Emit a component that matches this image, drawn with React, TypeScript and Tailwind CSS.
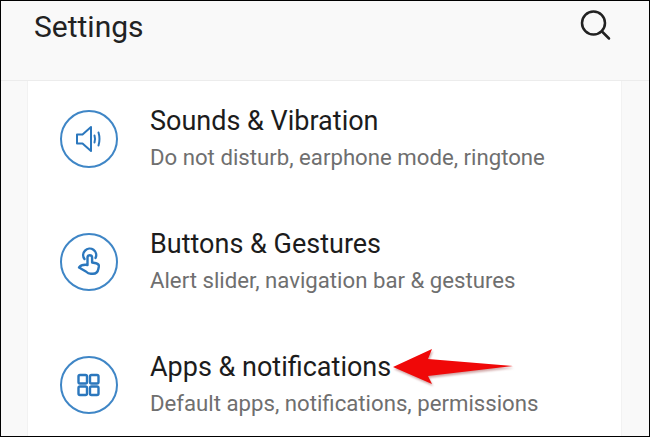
import type { ReactNode } from 'react';

const rows: { title: string; sub: string; icon: ReactNode; arrow?: boolean }[] = [
  {
    title: 'Sounds & Vibration',
    sub: 'Do not disturb, earphone mode, ringtone',
    icon: (
      <svg viewBox="0 0 30 30" className="h-[30px] w-[30px]" fill="none" stroke="#2b77bd" strokeWidth="2" strokeLinejoin="round" strokeLinecap="round">
        <path d="M3 10.500v9h5.500L17 27V3l-8.500 7.500z" />
        <path d="M20.500 11.500c.7 2.300.7 4.700 0 7" />
        <path d="M24.500 8.500c1.300 4.300 1.300 8.700 0 13" />
      </svg>
    ),
  },
  {
    title: 'Buttons & Gestures',
    sub: 'Alert slider, navigation bar & gestures',
    icon: (
      <svg viewBox="0 0 30 30" className="h-[30px] w-[30px]" fill="none" stroke="#2b77bd" strokeWidth="2.400" strokeLinejoin="round" strokeLinecap="round">
        <path d="M10.500 12a6.500 6.500 0 1 1 11-1" />
        <path d="M13.500 18v-7.500a2.300 2.300 0 0 1 4.600 0v5l4 .8c2 .4 3 1.700 2.700 3.500l-.4 2c-.5 3-2.500 5-5.500 5h-2c-2 0-3.500-.8-5-2.300L5 20.500c1.500-2 5-3 8.500-2.500z" />
      </svg>
    ),
  },
  {
    title: 'Apps & notifications',
    sub: 'Default apps, notifications, permissions',
    arrow: true,
    icon: (
      <svg viewBox="0 0 30 30" className="h-[30px] w-[30px]" fill="none" stroke="#2b77bd" strokeWidth="2.400">
        <rect x="4.500" y="5" width="8.500" height="8.500" rx="1.500" />
        <rect x="16" y="5" width="8.500" height="8.500" rx="1.500" />
        <rect x="4.500" y="16.500" width="8.500" height="8.500" rx="1.500" />
        <rect x="16" y="16.500" width="8.500" height="8.500" rx="1.500" />
      </svg>
    ),
  },
];

export default function App() {
  return (
    <div className="relative flex h-[437px] w-[650px] flex-col overflow-hidden border border-black bg-[#f9f9f9] font-['Roboto',sans-serif]">
      <header className="flex h-[80px] shrink-0 items-start justify-between border-b border-[#ececec] pl-[33px] pr-[38px]">
        <h1 className="mt-[6px] text-[30px] leading-[40px] text-[#222]">Settings</h1>
        <svg viewBox="0 0 32 32" className="mt-[8px] h-[32px] w-[32px]" fill="none" stroke="#222" strokeWidth="2.500" strokeLinecap="round">
          <circle cx="14.500" cy="14" r="11.500" />
          <path d="M23 22.500l7 7" />
        </svg>
      </header>

      <main className="ml-[26px] mr-[27px] flex-1 border-x border-[#f2f2f2] bg-white pl-[32px]">
        {rows.map((row) => (
          <div key={row.title} className="relative flex h-[123px] items-center pb-[8px]">
            <div className="flex h-[58px] w-[58px] shrink-0 items-center justify-center rounded-full border-2 border-[#3f86c6]">
              {row.icon}
            </div>
            <div className="mb-[3px] ml-[32px]">
              <div className="text-[27px] leading-[38px] text-[#1c1c1c]">{row.title}</div>
              <div className="mt-[1px] text-[22.2px] leading-[32px] text-[#6f6f6f]">{row.sub}</div>
            </div>
            {row.arrow && (
              <svg viewBox="0 0 122 38" className="absolute left-[331px] top-[21px] h-[38px] w-[122px] drop-shadow-[1px_2px_1px_rgba(120,0,0,0.35)]">
                <path d="M2 19L41 1l-4 10 85 7-85 10 4 8z" fill="#f00808" />
              </svg>
            )}
          </div>
        ))}
      </main>
    </div>
  );
}
